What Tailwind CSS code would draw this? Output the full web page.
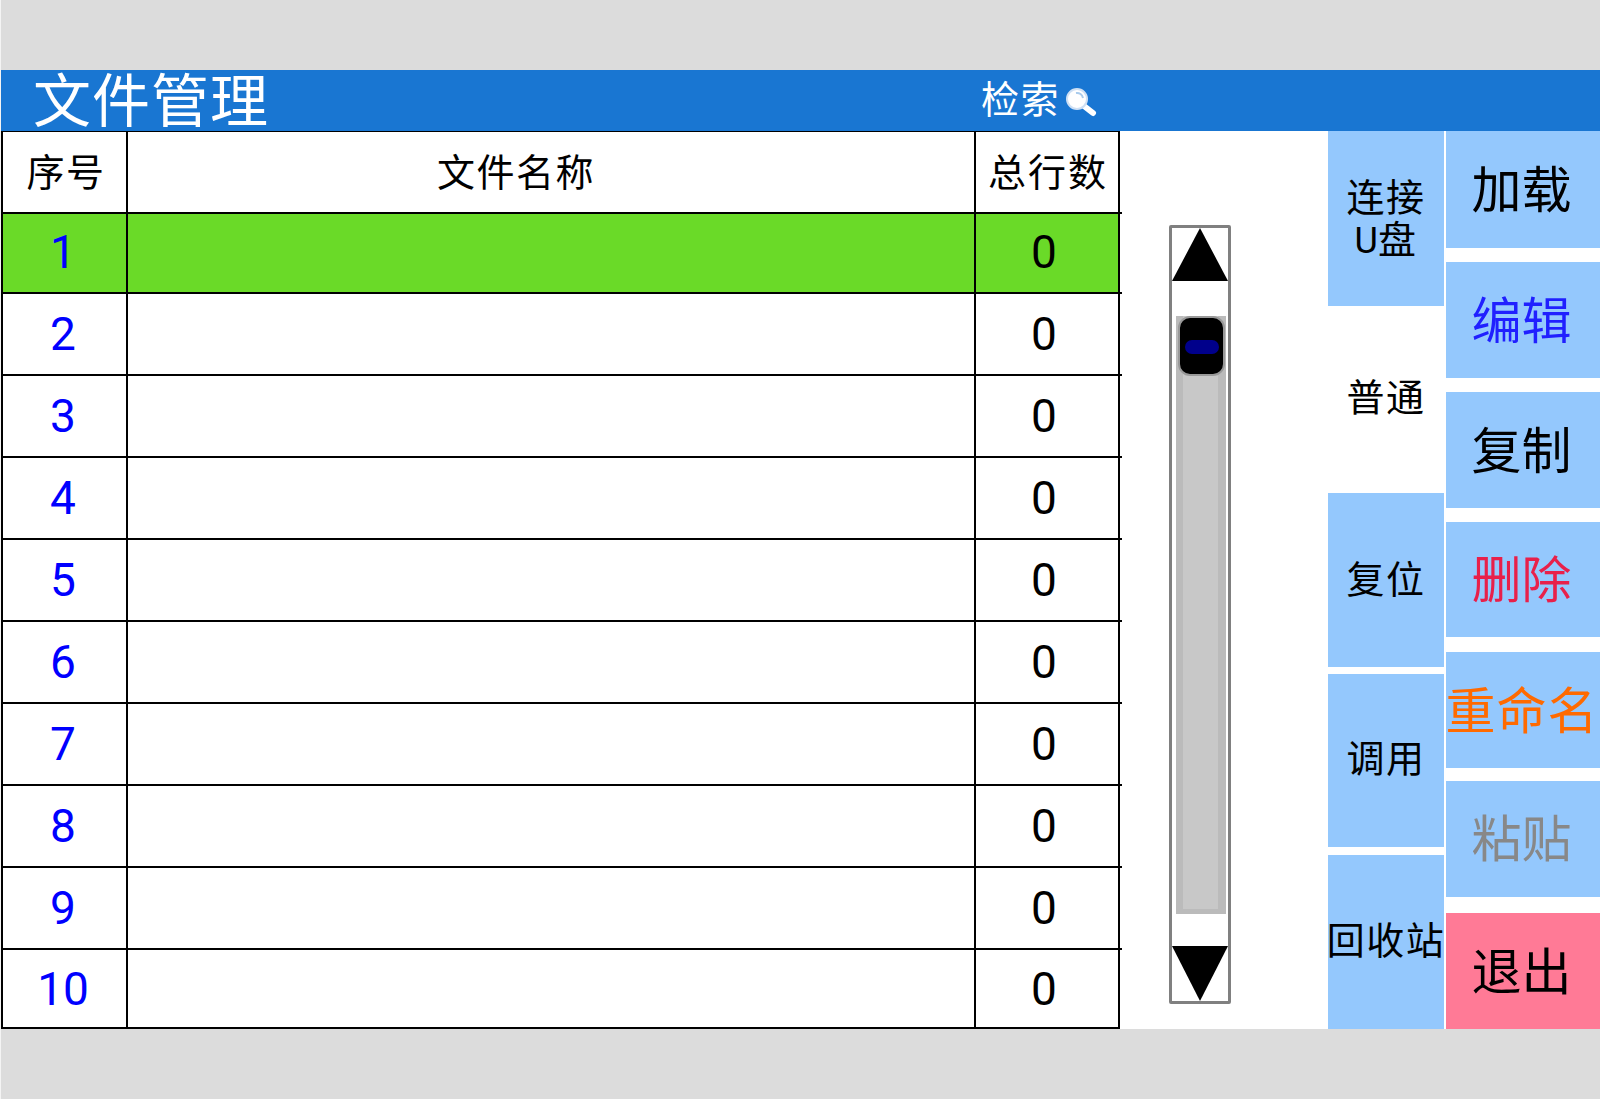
<!doctype html>
<html lang="zh">
<head>
<meta charset="utf-8">
<script src="https://cdn.jsdelivr.net/npm/@tailwindcss/browser@4"></script>
<title>文件管理</title>
</head>
<body class="m-0 bg-[#dcdcdc] font-['Liberation_Sans','Noto_Sans_CJK_SC',sans-serif]">
<div class="w-[1600px] h-[1099px] overflow-hidden flex flex-col pt-[70px] border-l border-[#f4f4f4]">
  <header class="h-[61px] bg-[#1976d2] text-white flex items-center relative">
    <h1 class="ml-[32px] w-[948px] text-[58px] leading-none font-normal tracking-[1px] mt-[3px]">文件管理</h1>
    <div class="flex items-center text-[38px] tracking-[1.5px] leading-none -mt-px">检索
      <svg class="ml-[5px] mt-[4px]" width="32" height="32" viewBox="0 0 32 32">
        <path d="M19 20 L28 27" stroke="#fff" stroke-width="6" stroke-linecap="round"/>
        <circle cx="12" cy="13" r="10" fill="#fff" stroke="#cfe0f4" stroke-width="2"/>
        <path d="M11 7a6 6 0 0 1 7 5" fill="none" stroke="#a9cbec" stroke-width="2"/>
      </svg>
    </div>
  </header>
  <main class="h-[898px] bg-white flex">
    <div class="w-[1119px] h-[899px] shrink-0 border-x-2 border-y-2 border-black grid grid-cols-[125px_848px_1fr] grid-rows-[82px_80px_82px_82px_82px_82px_82px_82px_82px_82px_1fr] text-center -mt-px font-['Roboto','Noto_Sans_CJK_SC',sans-serif]">
      <div class="border-r-2 border-b-2 border-black flex items-center justify-center text-[38px] tracking-[1.5px] text-black pl-[3px] pt-[2px]">序号</div>
      <div class="border-r-2 border-b-2 border-black flex items-center justify-center text-[38px] tracking-[1.5px] text-black pr-[70px] pt-[2px]">文件名称</div>
      <div class="relative border-b-2 border-black flex items-center justify-center text-[38px] tracking-[2px] text-black pl-[2px] pt-[2px] after:absolute after:content-[''] after:-right-[4px] after:-bottom-[2px] after:w-[4px] after:h-[2px] after:bg-black">总行数</div>

      <div class="bg-[#6ada28] border-r-2 border-b-2 border-black flex items-center justify-center text-[46px] text-[#0000ff] pr-[3px] pb-[2px]">1</div>
      <div class="bg-[#6ada28] border-r-2 border-b-2 border-black"></div>
      <div class="relative bg-[#6ada28] border-b-2 border-black flex items-center justify-center text-[46px] text-black pr-[6px] pb-[2px] after:absolute after:content-[''] after:-right-[4px] after:-bottom-[2px] after:w-[4px] after:h-[2px] after:bg-black">0</div>

      <div class="border-r-2 border-b-2 border-black flex items-center justify-center text-[46px] text-[#0000ff] pr-[3px]">2</div>
      <div class="border-r-2 border-b-2 border-black"></div>
      <div class="relative border-b-2 border-black flex items-center justify-center text-[46px] text-black pr-[6px] after:absolute after:content-[''] after:-right-[4px] after:-bottom-[2px] after:w-[4px] after:h-[2px] after:bg-black">0</div>

      <div class="border-r-2 border-b-2 border-black flex items-center justify-center text-[46px] text-[#0000ff] pr-[3px]">3</div>
      <div class="border-r-2 border-b-2 border-black"></div>
      <div class="relative border-b-2 border-black flex items-center justify-center text-[46px] text-black pr-[6px] after:absolute after:content-[''] after:-right-[4px] after:-bottom-[2px] after:w-[4px] after:h-[2px] after:bg-black">0</div>

      <div class="border-r-2 border-b-2 border-black flex items-center justify-center text-[46px] text-[#0000ff] pr-[3px]">4</div>
      <div class="border-r-2 border-b-2 border-black"></div>
      <div class="relative border-b-2 border-black flex items-center justify-center text-[46px] text-black pr-[6px] after:absolute after:content-[''] after:-right-[4px] after:-bottom-[2px] after:w-[4px] after:h-[2px] after:bg-black">0</div>

      <div class="border-r-2 border-b-2 border-black flex items-center justify-center text-[46px] text-[#0000ff] pr-[3px]">5</div>
      <div class="border-r-2 border-b-2 border-black"></div>
      <div class="relative border-b-2 border-black flex items-center justify-center text-[46px] text-black pr-[6px] after:absolute after:content-[''] after:-right-[4px] after:-bottom-[2px] after:w-[4px] after:h-[2px] after:bg-black">0</div>

      <div class="border-r-2 border-b-2 border-black flex items-center justify-center text-[46px] text-[#0000ff] pr-[3px]">6</div>
      <div class="border-r-2 border-b-2 border-black"></div>
      <div class="relative border-b-2 border-black flex items-center justify-center text-[46px] text-black pr-[6px] after:absolute after:content-[''] after:-right-[4px] after:-bottom-[2px] after:w-[4px] after:h-[2px] after:bg-black">0</div>

      <div class="border-r-2 border-b-2 border-black flex items-center justify-center text-[46px] text-[#0000ff] pr-[3px]">7</div>
      <div class="border-r-2 border-b-2 border-black"></div>
      <div class="relative border-b-2 border-black flex items-center justify-center text-[46px] text-black pr-[6px] after:absolute after:content-[''] after:-right-[4px] after:-bottom-[2px] after:w-[4px] after:h-[2px] after:bg-black">0</div>

      <div class="border-r-2 border-b-2 border-black flex items-center justify-center text-[46px] text-[#0000ff] pr-[3px]">8</div>
      <div class="border-r-2 border-b-2 border-black"></div>
      <div class="relative border-b-2 border-black flex items-center justify-center text-[46px] text-black pr-[6px] after:absolute after:content-[''] after:-right-[4px] after:-bottom-[2px] after:w-[4px] after:h-[2px] after:bg-black">0</div>

      <div class="border-r-2 border-b-2 border-black flex items-center justify-center text-[46px] text-[#0000ff] pr-[3px]">9</div>
      <div class="border-r-2 border-b-2 border-black"></div>
      <div class="relative border-b-2 border-black flex items-center justify-center text-[46px] text-black pr-[6px] after:absolute after:content-[''] after:-right-[4px] after:-bottom-[2px] after:w-[4px] after:h-[2px] after:bg-black">0</div>

      <div class="border-r-2 border-black flex items-center justify-center text-[46px] text-[#0000ff] pr-[3px] pt-px">10</div>
      <div class="border-r-2 border-black"></div>
      <div class="flex items-center justify-center text-[46px] text-black pr-[6px] pt-px">0</div>
    </div>

    <div class="w-[208px] shrink-0 pl-[49px] pt-[94px]">
      <div class="w-[62px] h-[779px] border-[3px] border-[#808080] rounded-[2px] flex flex-col">
        <svg class="shrink-0" width="56" height="56" viewBox="0 0 56 56"><path d="M28 0 L56 53 L0 53 Z" fill="#000"/></svg>
        <div class="ml-[4px] mt-[32px] w-[50px] h-[599px] bg-[#bbb] pl-[7px] pr-[8px] pb-[5px] relative">
          <div class="w-full h-full bg-[#c8c8c8]"></div>
          <div class="absolute left-[2px] top-0 w-[47px] h-[60px] bg-black rounded-[12px] border-2 border-[#999] flex items-center justify-center">
            <div class="w-[34px] h-[14px] mt-px rounded-full bg-[#00008b]"></div>
          </div>
        </div>
        <svg class="shrink-0 mt-[32px]" width="56" height="55" viewBox="0 0 56 55"><path d="M0 0 L56 0 L28 55 Z" fill="#000"/></svg>
      </div>
    </div>

    <div class="w-[116px] h-full shrink-0 flex flex-col text-[38px] tracking-[1.5px] leading-[42px] text-black text-center">
      <div class="h-[175px] bg-[#94c8fd] flex items-center justify-center pt-[2px]"><span>连接<br><span class="font-['Roboto'] text-[36px] tracking-normal">U</span>盘</span></div>
      <div class="h-[187px] flex items-center justify-center pb-[3px]">普通</div>
      <div class="h-[174px] bg-[#94c8fd] flex items-center justify-center pb-px">复位</div>
      <div class="h-[173px] mt-[7px] bg-[#94c8fd] flex items-center justify-center pb-[3px]">调用</div>
      <div class="h-[174px] mt-[8px] bg-[#94c8fd] flex items-center justify-center whitespace-nowrap pb-[2px]">回收站</div>
    </div>

    <div class="ml-[2px] w-[154px] h-full shrink-0 flex flex-col text-[50px] leading-none text-center">
      <div class="h-[117px] bg-[#94c8fd] text-black flex items-center justify-center pt-[3px] pr-[3px]">加载</div>
      <div class="h-[116px] mt-[14px] bg-[#94c8fd] text-[#2020ff] flex items-center justify-center pt-[4px] pr-[3px]">编辑</div>
      <div class="h-[116px] mt-[14px] bg-[#94c8fd] text-black flex items-center justify-center pt-[4px] pr-[3px]">复制</div>
      <div class="h-[115px] mt-[14px] bg-[#94c8fd] text-[#e8204a] flex items-center justify-center pt-[2px] pr-[3px]">删除</div>
      <div class="h-[116px] mt-[15px] bg-[#94c8fd] text-[#ff6a00] flex items-center justify-center whitespace-nowrap pt-[3px] pr-[2px] tracking-[1px]">重命名</div>
      <div class="h-[116px] mt-[13px] bg-[#94c8fd] text-[#888] flex items-center justify-center pt-[2px] pr-[3px]">粘贴</div>
      <div class="h-[116px] mt-[16px] bg-[#ff7a96] text-black flex items-center justify-center pt-[4px] pr-[3px]">退出</div>
    </div>
  </main>
</div>
</body>
</html>
